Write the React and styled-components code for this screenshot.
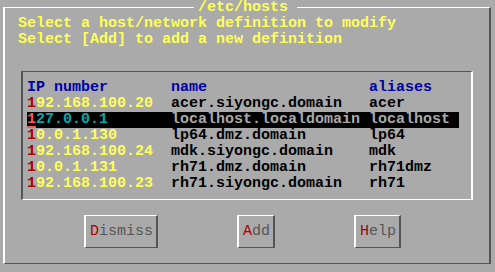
import React from 'react';
import styled, { createGlobalStyle } from 'styled-components';

const GlobalStyle = createGlobalStyle`
  html, body {
    margin: 0;
    padding: 0;
    background: #aaaaaa;
  }
`;

const hosts = [
  { ip: '192.168.100.20', name: 'acer.siyongc.domain', alias: 'acer' },
  { ip: '127.0.0.1', name: 'localhost.localdomain', alias: 'localhost' },
  { ip: '10.0.1.130', name: 'lp64.dmz.domain', alias: 'lp64' },
  { ip: '192.168.100.24', name: 'mdk.siyongc.domain', alias: 'mdk' },
  { ip: '10.0.1.131', name: 'rh71.dmz.domain', alias: 'rh71dmz' },
  { ip: '192.168.100.23', name: 'rh71.siyongc.domain', alias: 'rh71' },
];

const buttons = ['Dismiss', 'Add', 'Help'];

const App = () => {
  const selected = 1;

  return (
    <Screen>
      <GlobalStyle />
      <Window>
        <Title>/etc/hosts</Title>
        <Prompt>
          <div>Select a host/network definition to modify</div>
          <div>Select [Add] to add a new definition</div>
        </Prompt>
        <ListBox>
          <Row>
            <Header>IP number</Header>
            <Header>name</Header>
            <Header>aliases</Header>
          </Row>
          {hosts.map((host, i) => (
            <Row key={host.ip} $active={i === selected}>
              <Cell $color={i === selected ? '#00aaaa' : '#ffff55'}>
                <Hotkey $active={i === selected}>{host.ip[0]}</Hotkey>
                {host.ip.slice(1)}
              </Cell>
              <Cell $color={i === selected ? '#aaaaaa' : '#000000'}>
                {host.name}
              </Cell>
              <Cell $color={i === selected ? '#aaaaaa' : '#000000'}>
                {host.alias}
              </Cell>
            </Row>
          ))}
        </ListBox>
        <ButtonRow>
          {buttons.map((label) => (
            <Button key={label}>
              <Key>{label[0]}</Key>
              {label.slice(1)}
            </Button>
          ))}
        </ButtonRow>
      </Window>
    </Screen>
  );
};

const Screen = styled.div`
  width: 495px;
  height: 272px;
  overflow: hidden;
  background: #aaaaaa;
  padding-top: 7px;
  box-sizing: border-box;
  font-family: 'Liberation Mono', monospace;
  font-weight: bold;
  font-size: 15px;
  line-height: 16px;
  white-space: pre;
`;

const Window = styled.div`
  position: relative;
  margin-left: 3px;
  width: 488px;
  height: 257px;
  box-sizing: border-box;
  border-top: 1px solid #ffffff;
  border-left: 2px solid #ffffff;
  border-right: 2px solid #555555;
  border-bottom: 1px solid #555555;
  padding-top: 8px;
`;

const Title = styled.span`
  position: absolute;
  top: -8px;
  left: 189px;
  padding: 0 9px 0 4px;
  background: #aaaaaa;
  color: #ffff55;
`;

const Prompt = styled.div`
  margin-left: 13px;
  color: #ffff55;
`;

const ListBox = styled.div`
  margin: 23px 0 0 16px;
  width: 452px;
  box-sizing: border-box;
  border-top: 1px solid #555555;
  border-left: 2px solid #555555;
  border-right: 2px solid #ffffff;
  border-bottom: 1px solid #ffffff;
  padding: 8px 0 7px 4px;
`;

const Row = styled.div`
  display: grid;
  grid-template-columns: 144px 198px 90px;
  width: 432px;
  height: 16px;
  background: ${(p) => (p.$active ? '#000000' : 'transparent')};
`;

const Header = styled.span`
  color: #0000aa;
`;

const Cell = styled.span`
  color: ${(p) => p.$color};
`;

const Hotkey = styled.span`
  color: ${(p) => (p.$active ? '#ff5555' : '#aa0000')};
  box-shadow: ${(p) => (p.$active ? 'inset 0 -2px 0 #ff5555' : 'none')};
`;

const ButtonRow = styled.div`
  display: flex;
  gap: 79px;
  margin: 15px 0 0 79px;
`;

const Button = styled.div`
  box-sizing: border-box;
  border-top: 1px solid #ffffff;
  border-left: 2px solid #ffffff;
  border-right: 2px solid #555555;
  border-bottom: 1px solid #555555;
  padding: 8px 3px 7px 4px;
  height: 33px;
  color: #555555;
  font-weight: normal;
`;

const Key = styled.span`
  color: #aa0000;
`;

export default App;
